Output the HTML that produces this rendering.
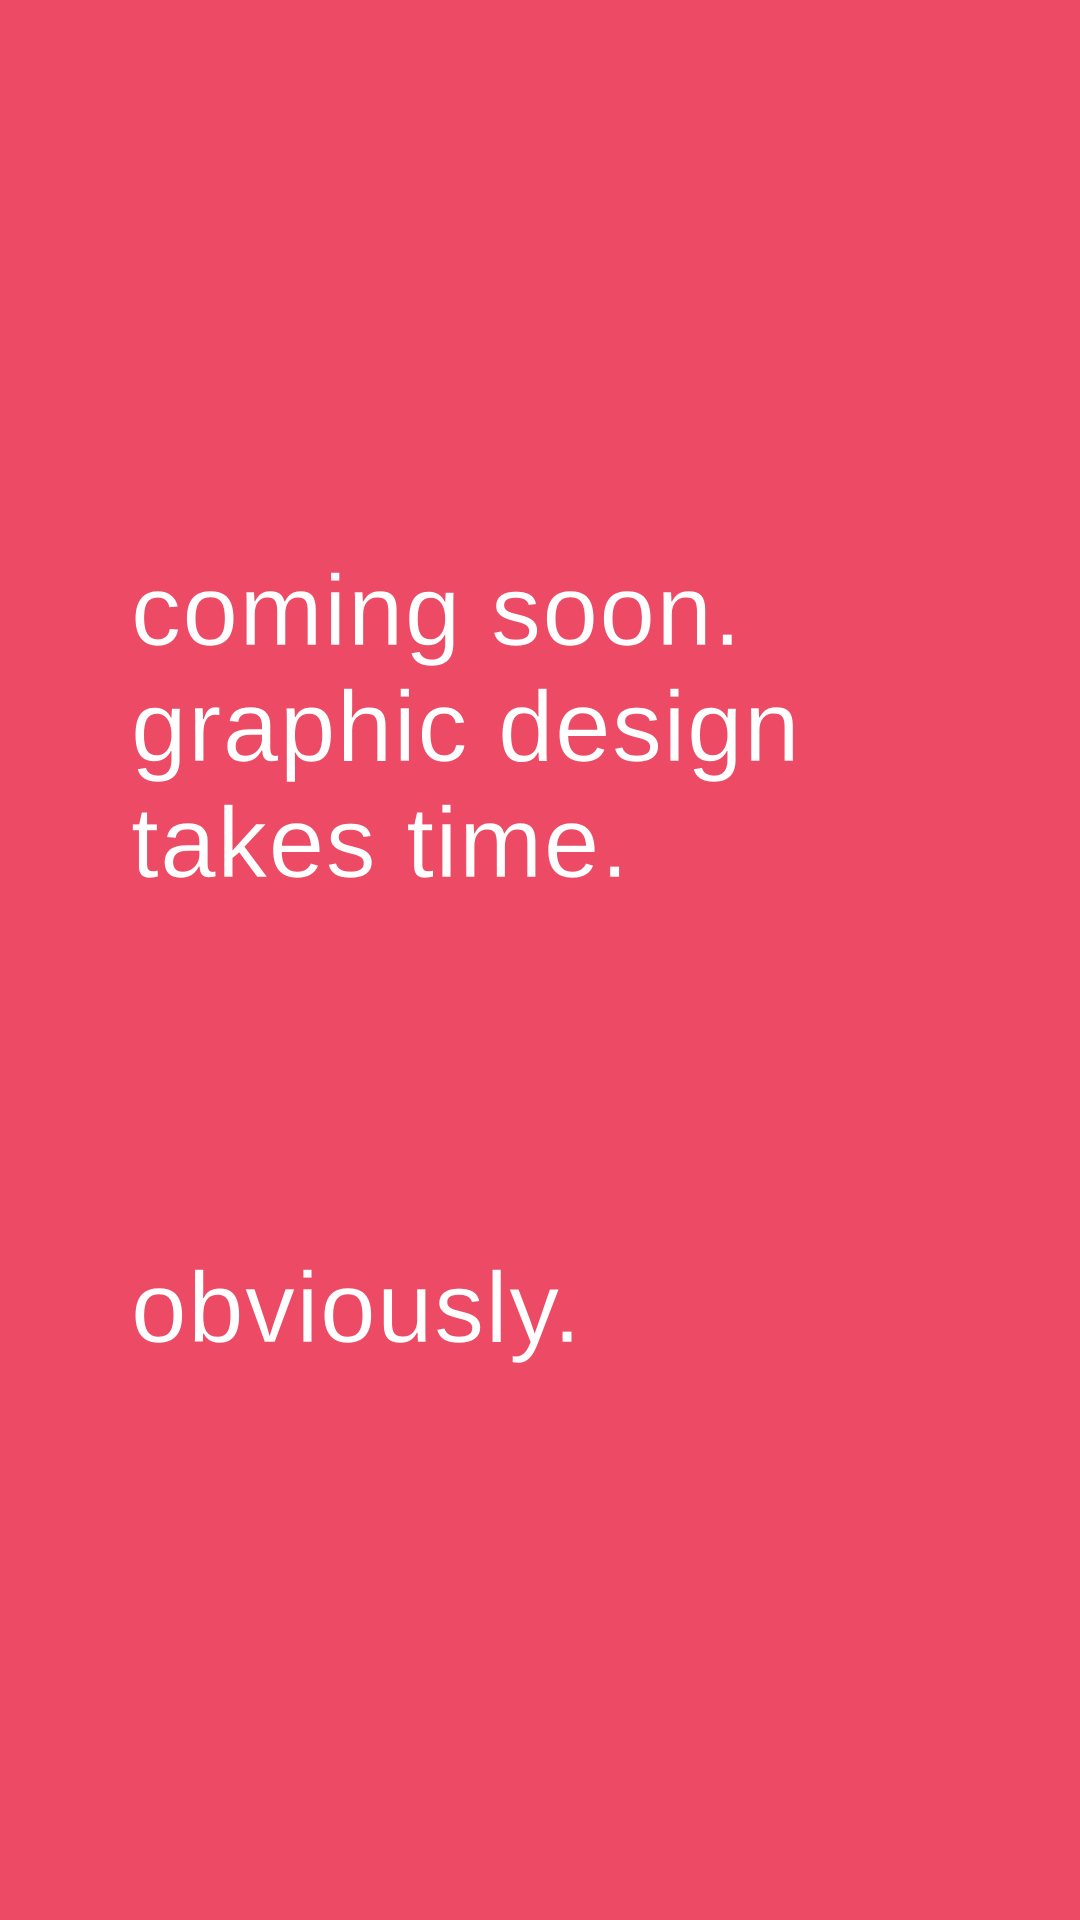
<!DOCTYPE html>
<html><head><meta charset="utf-8"><style>
html,body{margin:0;padding:0;width:1080px;height:1920px;background:#ED4A65;overflow:hidden}
.t{position:absolute;left:131px;color:#fff;font-family:"Liberation Sans",sans-serif;font-size:100px;line-height:116px;letter-spacing:1.4px;white-space:nowrap;-webkit-text-stroke:0.6px #ED4A65}
</style></head><body>
<div class="t" style="top:553px">coming soon.<br>graphic design<br>takes time.</div>
<div class="t" style="top:1250px">obviously.</div>
</body></html>
